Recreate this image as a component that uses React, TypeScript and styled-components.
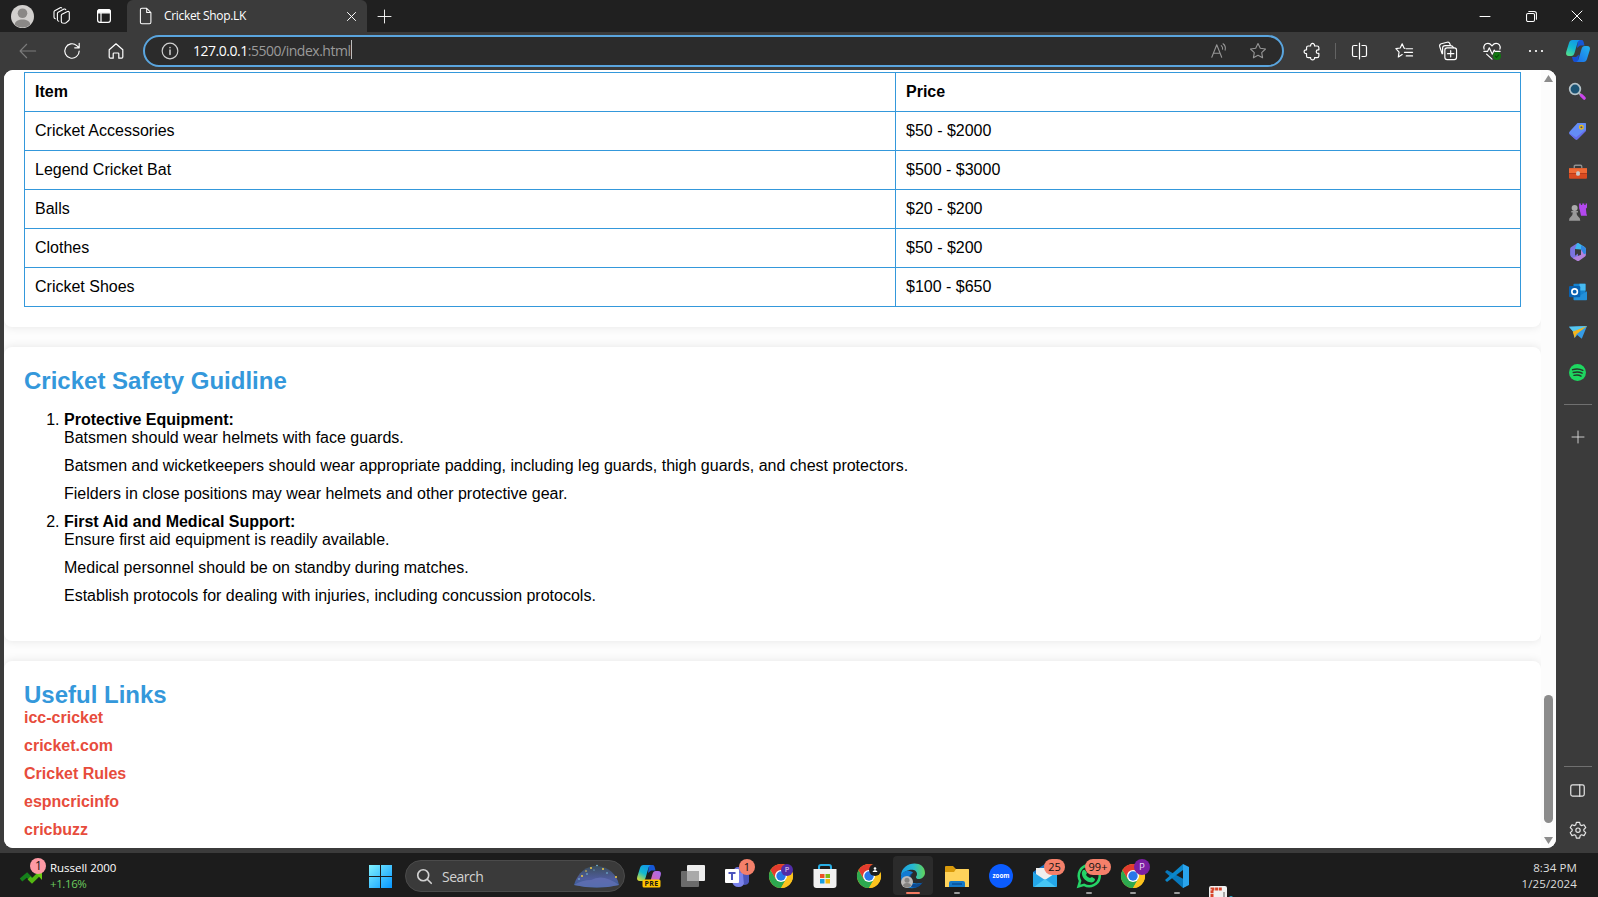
import React from "react";
import styled, { createGlobalStyle } from "styled-components";

const GlobalStyle = createGlobalStyle`
  * { box-sizing: border-box; }
  html, body { margin: 0; padding: 0; background: #3b3b3b; overflow: hidden; }
`;

const ui = `"Segoe UI", "Open Sans", "Noto Sans", sans-serif`;

const Screen = styled.div`
  width: 1598px;
  height: 897px;
  display: flex;
  flex-direction: column;
  overflow: hidden;
  background: #3b3b3b;
  font-family: ${ui};
  svg { display: block; flex: none; overflow: visible; }
`;

/* ---------- Title bar ---------- */
const TitleBar = styled.div`
  height: 32px;
  display: flex;
  flex: none;
  background: #202020;
  color: #fff;
`;
const Cell = styled.div<{ $w: number; $h?: number; $shift?: number }>`
  width: ${(p) => p.$w}px;
  height: ${(p) => (p.$h ? p.$h + "px" : "100%")};
  padding-left: ${(p) => p.$shift || 0}px;
  display: flex;
  flex: none;
  align-items: center;
  justify-content: center;
`;
const Tab = styled.div`
  width: 240px;
  display: flex;
  align-items: center;
  padding: 0 9px 0 12px;
  background: #3b3b3b;
  border-radius: 6px 6px 0 0;
`;
const TabTitle = styled.span`
  flex: 1;
  margin-left: 11px;
  font-size: 12px;
  line-height: 16px;
  letter-spacing: -0.33px;
  white-space: nowrap;
`;
const Spacer = styled.div`
  flex: 1;
`;

/* ---------- Toolbar ---------- */
const Toolbar = styled.div`
  height: 38px;
  flex: none;
  display: flex;
  align-items: center;
  padding-left: 6px;
  color: #fff;
`;
const AddressBar = styled.div`
  width: 1141px;
  height: 32px;
  margin: 0 5px;
  display: flex;
  align-items: center;
  flex: none;
  padding: 0 4px 0 16px;
  background: #2b2b2b;
  border: 2px solid #5aa5de;
  border-radius: 16px;
`;
const Url = styled.div`
  display: flex;
  align-items: center;
  flex: 1;
  margin-left: 14px;
  font-size: 14px;
  line-height: 20px;
  letter-spacing: -0.48px;
  color: #9a9a9a;
  b { font-weight: 400; color: #fff; }
`;
const Caret = styled.i`
  width: 1px;
  height: 19px;
  margin-top: -3px;
  background: #bdbdbd;
`;
const VRule = styled.div`
  width: 1px;
  height: 16px;
  margin: 0 2px;
  background: #636363;
`;

/* ---------- Page ---------- */
const Body = styled.div`
  height: 783px;
  flex: none;
  display: flex;
  padding-left: 4px;
`;
const Viewport = styled.div`
  width: 1552px;
  height: 778px;
  display: flex;
  overflow: hidden;
  border-radius: 9px;
  background: #fdfdfd;
  font-family: "Liberation Sans", Arial, sans-serif;
  font-size: 16px;
  line-height: 18px;
  color: #000;
`;
const Content = styled.main`
  width: 1537px;
  height: 778px;
  overflow: hidden;
`;
const Section = styled.section<{ $first?: boolean; $h?: number }>`
  height: ${(p) => (p.$h ? p.$h + "px" : "auto")};
  margin-bottom: 20px;
  padding: ${(p) => (p.$first ? 2 : 20)}px 20px 20px;
  background: #fff;
  border-radius: ${(p) => (p.$first ? "0 0 8px 8px" : "8px")};
  box-shadow: 0 0 10px rgba(0, 0, 0, 0.1);
`;
const Table = styled.table`
  width: 1497px;
  table-layout: fixed;
  border-collapse: collapse;
  th, td {
    padding: 10px;
    height: 39px;
    text-align: left;
    border: 1px solid #3498db;
  }
  th:first-child { width: 871px; }
`;
const Heading = styled.h2`
  margin: 0 0 1px;
  font-size: 24px;
  line-height: 27px;
  color: #3498db;
`;
const Guide = styled.ol`
  margin: 17px 0 0;
  padding-left: 40px;
  p { margin: 0 0 10px; }
  strong { display: block; }
`;
const LinkItem = styled.a`
  display: block;
  margin-bottom: 10px;
  font-weight: 700;
  color: #e74c3c;
`;
const Scrollbar = styled.div`
  width: 15px;
  display: flex;
  flex-direction: column;
  align-items: center;
  padding: 5px 0 4px;
  background: #fcfcfc;
`;
const Thumb = styled.div`
  width: 9px;
  height: 128px;
  margin: auto 0 14px;
  border-radius: 5px;
  background: #8b8b8b;
`;

/* ---------- Sidebar ---------- */
const Sidebar = styled.aside`
  width: 42px;
  display: flex;
  flex-direction: column;
  align-items: center;
  padding: 2px 0 0 1px;
  color: #e6e6e6;
`;
const HRule = styled.div<{ $gap: number }>`
  width: 28px;
  height: 1px;
  flex: none;
  margin: 12px 0 ${(p) => p.$gap}px;
  background: #707070;
`;

/* ---------- Taskbar ---------- */
const Taskbar = styled.footer`
  height: 44px;
  flex: none;
  display: flex;
  align-items: flex-start;
  background: #1c1c1c;
  color: #fff;
`;
const Widget = styled.div`
  width: 358px;
  display: flex;
  flex: none;
  padding: 5px 0 0 20px;
`;
const WidgetText = styled.div`
  margin-left: 4px;
  padding-top: 2px;
  font-size: 11.5px;
  line-height: 16px;
  letter-spacing: -0.02px;
  span { display: block; color: #6ccb5f; letter-spacing: -0.4px; }
`;
const SearchBox = styled.div`
  width: 220px;
  height: 32px;
  flex: none;
  margin: 7px 2px 0 3px;
  display: flex;
  align-items: center;
  padding: 0 4px 0 11px;
  background: #3a3a3a;
  border: 1px solid #4b4b4b;
  border-radius: 16px;
  font-size: 14px;
  letter-spacing: -0.5px;
  color: #d2d2d2;
  span { flex: 1; margin-left: 10px; }
`;
const TaskButton = styled.div<{ $active?: boolean; $run?: boolean }>`
  position: relative;
  width: 44px;
  height: 44px;
  flex: none;
  display: flex;
  align-items: center;
  justify-content: center;
  padding-top: 2px;
  &::before {
    content: "";
    position: absolute;
    inset: 3px 2px 2px;
    border-radius: 4px;
    background: ${(p) => (p.$active ? "#2b2b2b" : "transparent")};
  }
  &::after {
    content: "";
    position: absolute;
    bottom: 3px;
    left: ${(p) => (p.$active ? 15 : 19)}px;
    width: ${(p) => (p.$active ? 14 : 6)}px;
    height: 2px;
    border-radius: 1px;
    background: ${(p) => (p.$active ? "#f47b62" : p.$run ? "#9b9b9b" : "transparent")};
  }
  svg { position: relative; }
`;
const Badge = styled.span<{ $left: number; $w: number }>`
  position: absolute;
  top: 6px;
  left: ${(p) => p.$left}px;
  width: ${(p) => p.$w}px;
  height: 16px;
  border-radius: 8px;
  background: #f4806a;
  color: #111;
  font-size: 11px;
  line-height: 16px;
  text-align: center;
`;
const Snip = styled.div`
  padding: 33px 0 0 10px;
  height: 44px;
  overflow: hidden;
`;
const Clock = styled.div`
  margin-left: auto;
  padding: 7px 21px 0 0;
  text-align: right;
  font-size: 11.5px;
  line-height: 16px;
  letter-spacing: 0.12px;
  color: #dedede;
`;

/* ---------- Icons ---------- */
type IconProps = { size?: number; color?: string; w?: number; children: React.ReactNode };
const Line = ({ size = 20, color = "currentColor", w = 1.1, children }: IconProps) => (
  <svg width={size} height={size} viewBox="0 0 20 20" fill="none" stroke={color} strokeWidth={w} strokeLinecap="round" strokeLinejoin="round">
    {children}
  </svg>
);
const Art = ({ size = 24, children }: IconProps) => (
  <svg width={size} height={size} viewBox="0 0 24 24">{children}</svg>
);

const Plus = ({ s }: { s: number }) => <Line size={s} w={1.4}><path d="M10 0v20M0 10h20" /></Line>;

const CopilotIcon = ({ pre }: { pre?: boolean }) => {
  const id = pre ? "pre" : "bar";
  return (
    <Art>
      <defs>
        <linearGradient id={id + "A"} x1="0.7" y1="0" x2="0.2" y2="1">
          <stop offset="0" stopColor="#1397e8" /><stop offset=".5" stopColor="#13b9cf" /><stop offset="1" stopColor={pre ? "#d8dd35" : "#55e08b"} />
        </linearGradient>
        <linearGradient id={id + "B"} x1="1" y1="0" x2="0" y2="1">
          <stop offset="0" stopColor={pre ? "#a36cf5" : "#22b5ee"} /><stop offset="1" stopColor={pre ? "#f06089" : "#1b6be8"} />
        </linearGradient>
      </defs>
      <path d="M12 1h3.500c2 0 2.300 2 3 5.500H14L11 9z" fill="#1657d6" />
      <path d="M6.500 1H14c-1.500.4-2.200 1.600-2.800 3.800L8.500 14c-.6 2-1.500 3-3.200 3H3C.6 17-.4 15.600.2 13L3 4c.6-2 1.600-3 3.500-3z" fill={`url(#${id}A)`} />
      <path d="M12 23H9c-1.800 0-2.300-2-3-5h4l3-2.500z" fill={pre ? "#e9566b" : "#164fd3"} />
      <path d="M17.500 23H10c1.500-.4 2.200-1.600 2.800-3.800l2.700-9.200c.6-2 1.500-3 3.200-3H21c2.400 0 3.400 1.400 2.800 4L21 20c-.6 2-1.600 3-3.500 3z" fill={`url(#${id}B)`} />
      {pre && (
        <g>
          <rect x="5.500" y="15.500" width="18" height="8" rx="1.500" fill="#ffc400" />
          <text x="14.500" y="22.100" textAnchor="middle" fontSize="7" fontWeight="700" fontFamily="Open Sans" fill="#161616" letterSpacing=".3">PRE</text>
        </g>
      )}
    </Art>
  );
};

const Chrome = ({ big, dark }: { big?: boolean; dark?: boolean }) => (
  <Art>
    <circle cx="12" cy="12" r="12" fill="#fcc31e" />
    <path d="M1.600 6A12 12 0 0 0 12 24l5.200-9L12 12 6.800 15z" fill="#2da94f" />
    <path d="M1.600 6A12 12 0 0 1 22.400 6H12L6.800 15z" fill="#e33b2e" />
    <path d="M12 6h10.400A12 12 0 0 1 12 24l5.200-9z" fill="#fcc31e" />
    <circle cx="12" cy="12" r="6" fill="#fff" />
    <circle cx="12" cy="12" r="4.700" fill="#2877e8" />
    {dark ? (
      <g><circle cx="18" cy="6" r="6" fill="#1d1f20" /><circle cx="18" cy="4.500" r="1.300" fill="#fff" /><path d="M15.600 8c.3-2.400 4.500-2.400 4.800 0z" fill="#fff" /></g>
    ) : (
      <g>
        <circle cx={big ? 21 : 18} cy={big ? 3 : 6} r={big ? 8 : 6} fill={big ? "#7b1fa2" : "#512da8"} />
        <text x={big ? 21 : 18} y={big ? 6 : 8.300} textAnchor="middle" fontSize={big ? 8.500 : 6.500} fontFamily="Roboto" fill="#eadcf5">P</text>
      </g>
    )}
  </Art>
);

const items = [
  ["Cricket Accessories", "$50 - $2000"],
  ["Legend Cricket Bat", "$500 - $3000"],
  ["Balls", "$20 - $200"],
  ["Clothes", "$50 - $200"],
  ["Cricket Shoes", "$100 - $650"],
];
const guide = [
  { title: "Protective Equipment:", lines: ["Batsmen should wear helmets with face guards.", "Batsmen and wicketkeepers should wear appropriate padding, including leg guards, thigh guards, and chest protectors.", "Fielders in close positions may wear helmets and other protective gear."] },
  { title: "First Aid and Medical Support:", lines: ["Ensure first aid equipment is readily available.", "Medical personnel should be on standby during matches.", "Establish protocols for dealing with injuries, including concussion protocols."] },
];
const links = ["icc-cricket", "cricket.com", "Cricket Rules", "espncricinfo", "cricbuzz"];

const Titles = () => (
  <TitleBar>
    <Cell $w={44}>
      <Art size={23}>
        <circle cx="12" cy="12" r="12" fill="#d2d0ce" />
        <circle cx="12" cy="8.600" r="5" fill="#8a8886" />
        <path d="M4 20.500c0-7 16-7 16 0A12 12 0 0 1 4 20.500z" fill="#8a8886" />
      </Art>
    </Cell>
    <Cell $w={36}>
      <svg width="18" height="18" viewBox="0 0 18 18" fill="none" stroke="#fff" strokeWidth="1.100" strokeLinecap="round" strokeLinejoin="round">
        <path d="M8.300 8.500q0-.8.700-1.200l5.500-2.800q1.500-.5 1.800.8v6.900q0 .8-.6 1.300l-2.400 2.200q-.5.500-1.300.5L9.600 16q-1.300-.2-1.300-1.500z" />
        <path d="M5.800 14.200q-1.300-.2-1.400-1.500V6.500q0-.8.700-1.200l6-3.200q1.200-.5 1.700.6" />
        <path d="M2.300 11.800Q1 11.500 1 10.300V5q0-.8.700-1.200L7.200.7q1-.4 1.600.3" />
      </svg>
    </Cell>
    <Cell $w={47}>
      <svg width="14" height="14" viewBox="0 0 14 14" fill="none" stroke="#fff" strokeWidth="1.200">
        <rect x=".6" y=".6" width="12.800" height="12.800" rx="2.300" />
        <path d="M.6 3.800h12.800V3A2.400 2.400 0 0 0 11 .6H3A2.400 2.400 0 0 0 .6 3z" fill="#fff" />
        <path d="M4 4v9.500" />
      </svg>
    </Cell>
    <Tab>
      <Line size={14} w={1.500}><path d="M4-1h7l6 6v14a2 2 0 0 1-2 2H4a2 2 0 0 1-2-2V1a2 2 0 0 1 2-2zM11-1v6h6" /></Line>
      <TabTitle>Cricket Shop.LK</TabTitle>
      <Cell $w={14} $h={14}><Line size={9} w={2.200}><path d="M1 1l18 18M19 1L1 19" /></Line></Cell>
    </Tab>
    <Cell $w={35}><Plus s={13} /></Cell>
    <Spacer />
    <Cell $w={46}><Line size={10} w={2}><path d="M0 11h20" /></Line></Cell>
    <Cell $w={45} $shift={1}><Line size={11} w={1.900}><rect x="1" y="4.500" width="14.500" height="14.500" rx="2.500" /><path d="M5 1h10a4 4 0 0 1 4 4v10" /></Line></Cell>
    <Cell $w={45} $shift={3}><Line size={10} w={2}><path d="M0 0l20 20M20 0L0 20" /></Line></Cell>
  </TitleBar>
);

const Tools = () => (
  <Toolbar>
    <Cell $w={44}><Line size={18} color="#7d7d7d" w={1.200}><path d="M18.500 10H1.500M8.500 2.500L1.200 10l7.300 7.500" /></Line></Cell>
    <Cell $w={44}><Line size={18} w={1.300}><path d="M18 10a8 8 0 1 1-2.700-6L18 6.500M18 1.500v5h-5" /></Line></Cell>
    <Cell $w={44}><Line size={16} w={1.500}><path d="M1.500 8.500L10 1l8.500 7.500v9a1.500 1.500 0 0 1-1.500 1.500h-3.500v-5.500a1 1 0 0 0-1-1h-5a1 1 0 0 0-1 1V19H3a1.500 1.500 0 0 1-1.500-1.500z" /></Line></Cell>
    <AddressBar>
      <Line size={18} color="#d0d0d0" w={1.300}><circle cx="10" cy="10" r="8.700" /><path d="M10 9v5M10 6.200v.2" strokeWidth="1.700" /></Line>
      <Url><b>127.0.0.1</b>:5500/index.html<Caret /></Url>
      <Cell $w={40} $shift={1}><Line size={18} color="#969696" w={1.200}><path d="M2 17L7.500 3 13 17M4 12.500h7M12.500 4c1.300 1 1.700 2.400 1.500 4M14.500 2c2.300 1.700 3 4.300 2.300 7" /></Line></Cell>
      <Cell $w={40}><Line size={20} color="#969696" w={1.100}><path d="M10 2.500l2.300 4.800 5.200.7-3.800 3.600.9 5.200-4.600-2.500-4.600 2.500.9-5.200L2.500 8l5.200-.7z" /></Line></Cell>
    </AddressBar>
    <Cell $w={44} $shift={2}><Line size={17} w={1.400}><path d="M5 3.500h2.800c-.5-4 5.100-4 4.600 0h3.100q2 0 2 2V8h-1c-2.800 0-2.800 4.300 0 4.300h1v3q0 2-2 2h-3.100c.5 3.500-5.100 3.500-4.600 0H5q-2 0-2-2v-2.700C-.8 12.800-.8 7.600 3 8V5.500q0-2 2-2z" /></Line></Cell>
    <VRule />
    <Cell $w={43}><svg width="17" height="18" viewBox="0 0 17 18" fill="none" stroke="#fff" strokeWidth="1.200" strokeLinecap="round"><path d="M6 3.500H3Q1.500 3.500 1.500 5v8q0 1.500 1.500 1.500h3M11 3.500h3q1.500 0 1.500 1.500v8q0 1.500-1.500 1.500h-3M8.500 1v16" /></svg></Cell>
    <Cell $w={45}><Line size={18} w={1.300}><path d="M11 7.100l-1-.4L8 2 5.800 6.700 1 7.400l3.500 3.800-.8 5.500L8 14M12.500 7.500h7M10.500 11.500h9M12.500 15.500h7" /></Line></Cell>
    <Cell $w={44}><Line size={18} w={1.300}><rect x="6.500" y="6.500" width="13" height="13" rx="2.500" /><path d="M13 9.500v7M9.500 13h7M3.500 13L.8 5A2.500 2.500 0 0 1 2.500 2L9 .3a2.500 2.500 0 0 1 3 1.700l.6 1.500M4 13V7q0-3 3-3h6q2.500 0 3 2.300" /></Line></Cell>
    <Cell $w={44}>
      <Line size={18} w={1.300}>
        <path d="M1.200 8C0 4 2.500 1.500 5.500 1.500 8 1.500 9 3 10 4.200 11 3 12 1.500 14.500 1.500c3 0 5.500 2.500 4.300 6.500M1 10.500h4l2-4 3.300 7 2.200-4.500 1 1.500H19M4 13.500l6 5.500" />
        <circle cx="15.600" cy="15.600" r="4.400" fill="#127612" stroke="none" /><path d="M13.800 15.800l1.200 1.200 2.500-2.700" stroke="#084a08" />
      </Line>
    </Cell>
    <Cell $w={44}><Line size={16} w={2.800}><path d="M2.500 10h.01M10 10h.01M17.500 10h.01" /></Line></Cell>
    <Cell $w={40}><CopilotIcon /></Cell>
  </Toolbar>
);

const Side = () => (
  <Sidebar>
    <Cell $w={40} $h={38}><Art size={17}><path d="M14 14l3 3" stroke="#a7a7a7" strokeWidth="3" /><circle cx="8.500" cy="8.500" r="7.500" fill="#1c5373" stroke="#b4c2c8" strokeWidth="2.500" /><path d="M17.500 17.500l4 4" stroke="#cb45ec" strokeWidth="4.500" strokeLinecap="round" /></Art></Cell>
    <Cell $w={40} $h={42}><Art size={17}><path d="M12 0h11q1 0 1 1v10L12 23q-1.500 1-3 0L1 16q-2-2 0-4z" fill="#648cf5" /><path d="M0 14l10 6L24 9v2L12 23q-1.500 1-3 0L1 16z" fill="#666be9" /><circle cx="17.500" cy="6" r="2.500" fill="#394a91" stroke="#edbd18" strokeWidth="2" /></Art></Cell>
    <Cell $w={40} $h={40}><Art size={18}><path d="M7 7V4.500Q7 3 8.500 3h7Q17 3 17 4.500V7" fill="none" stroke="#909090" strokeWidth="1.800" /><rect y="7" width="24" height="14" rx="1.500" fill="#d94a20" /><path d="M0 7h24v7H0z" fill="#f06a35" /><path d="M0 14h24" stroke="#a83216" /><rect x="9.500" y="11" width="5" height="6" rx="2" fill="#c9c9c9" /></Art></Cell>
    <Cell $w={40} $h={40}><Art size={18}><path d="M13.500.5h2.300v2.300h1.800V.5h2.800v2.300h1.800V.5H24V6l-1.500 1.500.8 7q.7 1 .7 2.500h-8l-1.500-7L13.500 7z" fill="#b348ee" /><circle cx="7.500" cy="6.500" r="4" fill="#aaa" /><path d="M3 10.500h9v2.300h-2q0 4 2.500 5.500Q15 20 15 23.500H0Q0 20 2.500 18.300 5 16.800 5 12.800H3z" fill="#999" /></Art></Cell>
    <Cell $w={40} $h={40}><Art size={18}><path d="M10.500.5Q12-.3 13.500.5L10 6 8 8v9l4-3v6l-5 1.500-4-3Q1.500 17.500 1.500 15V8q0-1.800 1.500-2.700z" fill="#7c74df" /><path d="M10.500.5Q12-.3 13.500.5L21 5.200q1.500 1 1.500 2.800v5L16 8.500 8 8z" fill="#3eb6ee" /><path d="M22.500 8v7.500q0 1.800-1.500 2.700l-7.500 5.300q-1.500.8-3 0L5 20l11-4.500v-7z" fill="#b583dc" /><path d="M16 8.500V3l5 2.500q1.500 1 1.500 2.800V14L20 15z" fill="#3187e2" /></Art></Cell>
    <Cell $w={40} $h={40}><Art size={18}><rect x="6" y="1" width="16" height="18" rx="1" fill="#1683ce" /><path d="M14 1h8v9h-8z" fill="#47baf0" /><path d="M6 12l8 5 10-6v11q0 1-1 1H7q-1 0-1-1z" fill="#238fd8" /><rect y="4" width="15" height="15" rx="1.500" fill="#0861b1" /><circle cx="7.500" cy="11.500" r="3.700" fill="none" stroke="#fff" strokeWidth="2.200" /></Art></Cell>
    <Cell $w={40} $h={40}><Art size={18}><path d="M0 5L24 4 17 21l-6-5-3.500 4L6 12z" fill="#359be6" /><path d="M0 5l24-1L6 12z" fill="#57c6ed" /><path d="M24 4L5 11.500 7.500 20l2.500-5z" fill="#f5b51d" /></Art></Cell>
    <Cell $w={40} $h={40}><Art size={17}><circle cx="12" cy="12" r="12" fill="#1ed760" /><path d="M5 8q8-2.500 14.500 1M6 12q7-2 12.500 1M7 16q6-1.500 10 1" fill="none" stroke="#26352b" strokeWidth="2" strokeLinecap="round" /></Art></Cell>
    <HRule $gap={11} />
    <Cell $w={40} $h={41}><Plus s={12} /></Cell>
    <Spacer />
    <HRule $gap={6} />
    <Cell $w={40} $h={34}><Line size={15} w={1.600}><rect x="1" y="2.500" width="18" height="15" rx="2.500" /><path d="M13 2.500v15" /></Line></Cell>
    <Cell $w={40} $h={46}><Line size={18} w={1.300}><path d="M8.200 1.500h3.600l.7 2.800 1.400.8 2.800-.9 1.900 3.200-2.100 2v1.600l2.100 2-1.900 3.200-2.800-.9-1.400.8-.7 2.900H8.200l-.7-2.900-1.400-.8-2.800.9L1.400 13l2.100-2V9.400l-2.100-2 1.900-3.200 2.800.9 1.400-.8z" /><circle cx="10" cy="10.200" r="2.400" /></Line></Cell>
  </Sidebar>
);

const Apps = () => (
  <>
    <TaskButton><CopilotIcon pre /></TaskButton>
    <TaskButton><Art><rect x="6" y="1" width="18" height="16" rx="1" fill="#ededed" /><rect y="7" width="18" height="16" rx="1" fill="#6b6b6b" /><path d="M6 7h12v10H6z" fill="#a9a9a9" /></Art></TaskButton>
    <TaskButton><Art><circle cx="13" cy="7" r="4" fill="#6d74dc" /><path d="M7 9h13v8q-1 6-6.500 6T7 17z" fill="#7b83eb" /><path d="M18 10h6v8q-1 3-5 3z" fill="#4c56bb" /><rect y="5" width="14" height="14" rx="1" fill="#fff" /><path d="M3.500 9h7M7 9v7" stroke="#4b53bc" strokeWidth="2" /></Art><Badge $left={24} $w={16}>1</Badge></TaskButton>
    <TaskButton><Chrome /></TaskButton>
    <TaskButton><Art><path d="M6 6V3q0-2 2-2h8q2 0 2 2v3" fill="none" stroke="#28aee4" strokeWidth="2" /><path d="M.5 5h23v16q0 3-3 3h-17q-3 0-3-3z" fill="#f1f1f1" /><path d="M7 10h4.500v4H7z" fill="#ef5126" /><path d="M12.500 10H17v4h-4.500z" fill="#7fb917" /><path d="M7 15h4.500v4.500H7z" fill="#199fe2" /><path d="M12.500 15H17v4.500h-4.500z" fill="#f4b80c" /></Art></TaskButton>
    <TaskButton><Chrome dark /></TaskButton>
    <TaskButton $active>
      <Art>
        <defs><linearGradient id="edA"><stop stopColor="#1b9de2" /><stop offset=".5" stopColor="#26b9d1" /><stop offset="1" stopColor="#61d45a" /></linearGradient></defs>
        <path d="M0 12C0-3 24-5 24 9c0 6-9 8-9 4 0-1 1-1 1-3 0-7-13-5-16 2z" fill="url(#edA)" />
        <path d="M0 12c2-7 11-6 12-3-5 1-6 13 8 10q1 0 0 1C11 29-1 22 0 12z" fill="#127bd2" />
        <path d="M9 14c0 8 9 7 13 4-4 7-11 7-14 3-3-5-1-9 3-11z" fill="#0c4a91" />
        <circle cx="6" cy="18" r="6" fill="#bdbbb9" /><circle cx="6" cy="16.300" r="2.500" fill="#858381" /><path d="M2 22q0-3 4-3t4 3q-4 3-8 0z" fill="#858381" />
      </Art>
    </TaskButton>
    <TaskButton $run><Art><path d="M0 3q0-1 1-1h7l3 3h12q1 0 1 1v7H0z" fill="#d99a0b" /><path d="M0 8h9l2-3h12q1 0 1 1v17H0z" fill="#ffd35b" /><path d="M4 23v-4q0-2 2-2h12q2 0 2 2v4z" fill="#1479c9" /><path d="M7 20h10" stroke="#084f96" strokeWidth="1.500" /></Art></TaskButton>
    <TaskButton><Art><circle cx="12" cy="12" r="12" fill="#0b5cff" /><text x="12" y="13.700" textAnchor="middle" fontFamily="Open Sans" fontSize="6.300" fontWeight="700" fill="#fff">zoom</text></Art></TaskButton>
    <TaskButton><Art><path d="M0 8L12 0l12 8v14q0 1-1 1H1q-1 0-1-1z" fill="#1674c5" /><path d="M3 4h18v13H3z" fill="#eee" /><path d="M0 8l12 8 12-8v14q0 1-1 1H1q-1 0-1-1z" fill="#24a6e8" /><path d="M1 23l11-8 11 8z" fill="#46c5f3" /></Art><Badge $left={21} $w={21}>25</Badge></TaskButton>
    <TaskButton $run><Art><path d="M1.500 22.500l1.600-5.700a10.500 10.500 0 1 1 4 4z" fill="none" stroke="#25d366" strokeWidth="2.500" /><path d="M8 6l2 3-1 2q2 3 4 3l2-1 3 2c0 3-3 4-6 3-4-1-8-6-7-10q1-3 3-2z" fill="#25d366" /></Art><Badge $left={18} $w={26}>99+</Badge></TaskButton>
    <TaskButton $run><Chrome big /></TaskButton>
    <TaskButton $run><Art><path d="M0 8l2-2L24 18v2l-6 4z" fill="#0879bd" /><path d="M0 16l2 2L18 6V0z" fill="#0b87cb" /><path d="M18 0l6 3v18l-6 3z" fill="#29a4ed" /></Art></TaskButton>
  </>
);

export default function App() {
  return (
    <Screen>
      <GlobalStyle />
      <Titles />
      <Tools />
      <Body>
        <Viewport>
          <Content>
            <Section $first>
              <Table>
                <thead><tr><th>Item</th><th>Price</th></tr></thead>
                <tbody>{items.map(([name, price]) => <tr key={name}><td>{name}</td><td>{price}</td></tr>)}</tbody>
              </Table>
            </Section>
            <Section $h={294}>
              <Heading>Cricket Safety Guidline</Heading>
              <Guide>
                {guide.map((g) => (
                  <li key={g.title}><strong>{g.title}</strong>{g.lines.map((l) => <p key={l}>{l}</p>)}</li>
                ))}
              </Guide>
            </Section>
            <Section $h={220}>
              <Heading>Useful Links</Heading>
              {links.map((l) => <LinkItem key={l}>{l}</LinkItem>)}
            </Section>
          </Content>
          <Scrollbar>
            <svg width="9" height="7" viewBox="0 0 9 7"><path d="M4.500 0L9 7H0z" fill="#8b8b8b" /></svg>
            <Thumb />
            <svg width="9" height="7" viewBox="0 0 9 7"><path d="M4.500 7L9 0H0z" fill="#8b8b8b" /></svg>
          </Scrollbar>
        </Viewport>
        <Side />
      </Body>
      <Taskbar>
        <Widget>
          <svg width="26" height="28" viewBox="0 0 26 28">
            <path d="M1 22l6-5 5 5" fill="none" stroke="#15801b" strokeWidth="4" />
            <path d="M9 20l3 3 7-7" fill="none" stroke="#54b812" strokeWidth="4" />
            <path d="M14 13h8v9z" fill="#6ccb13" />
            <circle cx="18" cy="8" r="8" fill="#ff99a4" />
            <text x="18.500" y="12.300" textAnchor="middle" fontFamily="Open Sans" fontSize="12" fill="#111">1</text>
          </svg>
          <WidgetText>Russell 2000<span>+1.16%</span></WidgetText>
        </Widget>
        <TaskButton>
          <svg width="23" height="23" viewBox="0 0 23 23">
            <defs><linearGradient id="win" gradientUnits="userSpaceOnUse" x1="0" y1="0" x2="23" y2="23"><stop stopColor="#81f2ff" /><stop offset="1" stopColor="#0696ff" /></linearGradient></defs>
            <path d="M0 0h11v11H0zM12 0h11v11H12zM0 12h11v11H0zM12 12h11v11H12z" fill="url(#win)" />
          </svg>
        </TaskButton>
        <SearchBox>
          <Line size={15} w={2.200}><circle cx="8.300" cy="8.300" r="7.300" /><path d="M14 14l5 5" /></Line>
          <span>Search</span>
          <svg width="46" height="24" viewBox="0 0 46 24">
            <defs><linearGradient id="dome" x2="0" y2="1"><stop stopColor="#3b4f5c" /><stop offset=".6" stopColor="#4f5c9c" /><stop offset="1" stopColor="#34619a" /></linearGradient></defs>
            <path d="M0 21C4 7 14 1 24 2s19 8 21 19q-22 5-45 0z" fill="url(#dome)" />
            <path d="M0 21q8-5 17-5 12-7 28 5-22 5-45 0z" fill="#6572b8" opacity=".7" />
            <g fill="#f1ca45"><circle cx="8" cy="12" r="1" /><circle cx="17" cy="4" r="1" /><circle cx="29" cy="5" r="1" /><circle cx="42" cy="13" r="1" /><circle cx="12" cy="7" r=".8" /></g>
            <g fill="#7cc7e8"><circle cx="5" cy="15" r=".8" /><circle cx="23" cy="1.500" r=".8" /><circle cx="13" cy="10" r=".8" /><circle cx="33" cy="9" r=".8" /><circle cx="20" cy="6" r=".6" /></g>
          </svg>
        </SearchBox>
        <Apps />
        <Snip>
          <svg width="28" height="18" viewBox="0 0 28 18"><rect width="18" height="18" rx="2" fill="#f1f1f1" /><path d="M3 11V3h10" fill="none" stroke="#d8442a" strokeWidth="3" strokeDasharray="3 .7" /><path d="M15 6v5" stroke="#aaa" strokeWidth="2" /><circle cx="22" cy="12" r="2" fill="#2aa4c9" /></svg>
        </Snip>
        <Clock>8:34 PM<br />1/25/2024</Clock>
      </Taskbar>
    </Screen>
  );
}
